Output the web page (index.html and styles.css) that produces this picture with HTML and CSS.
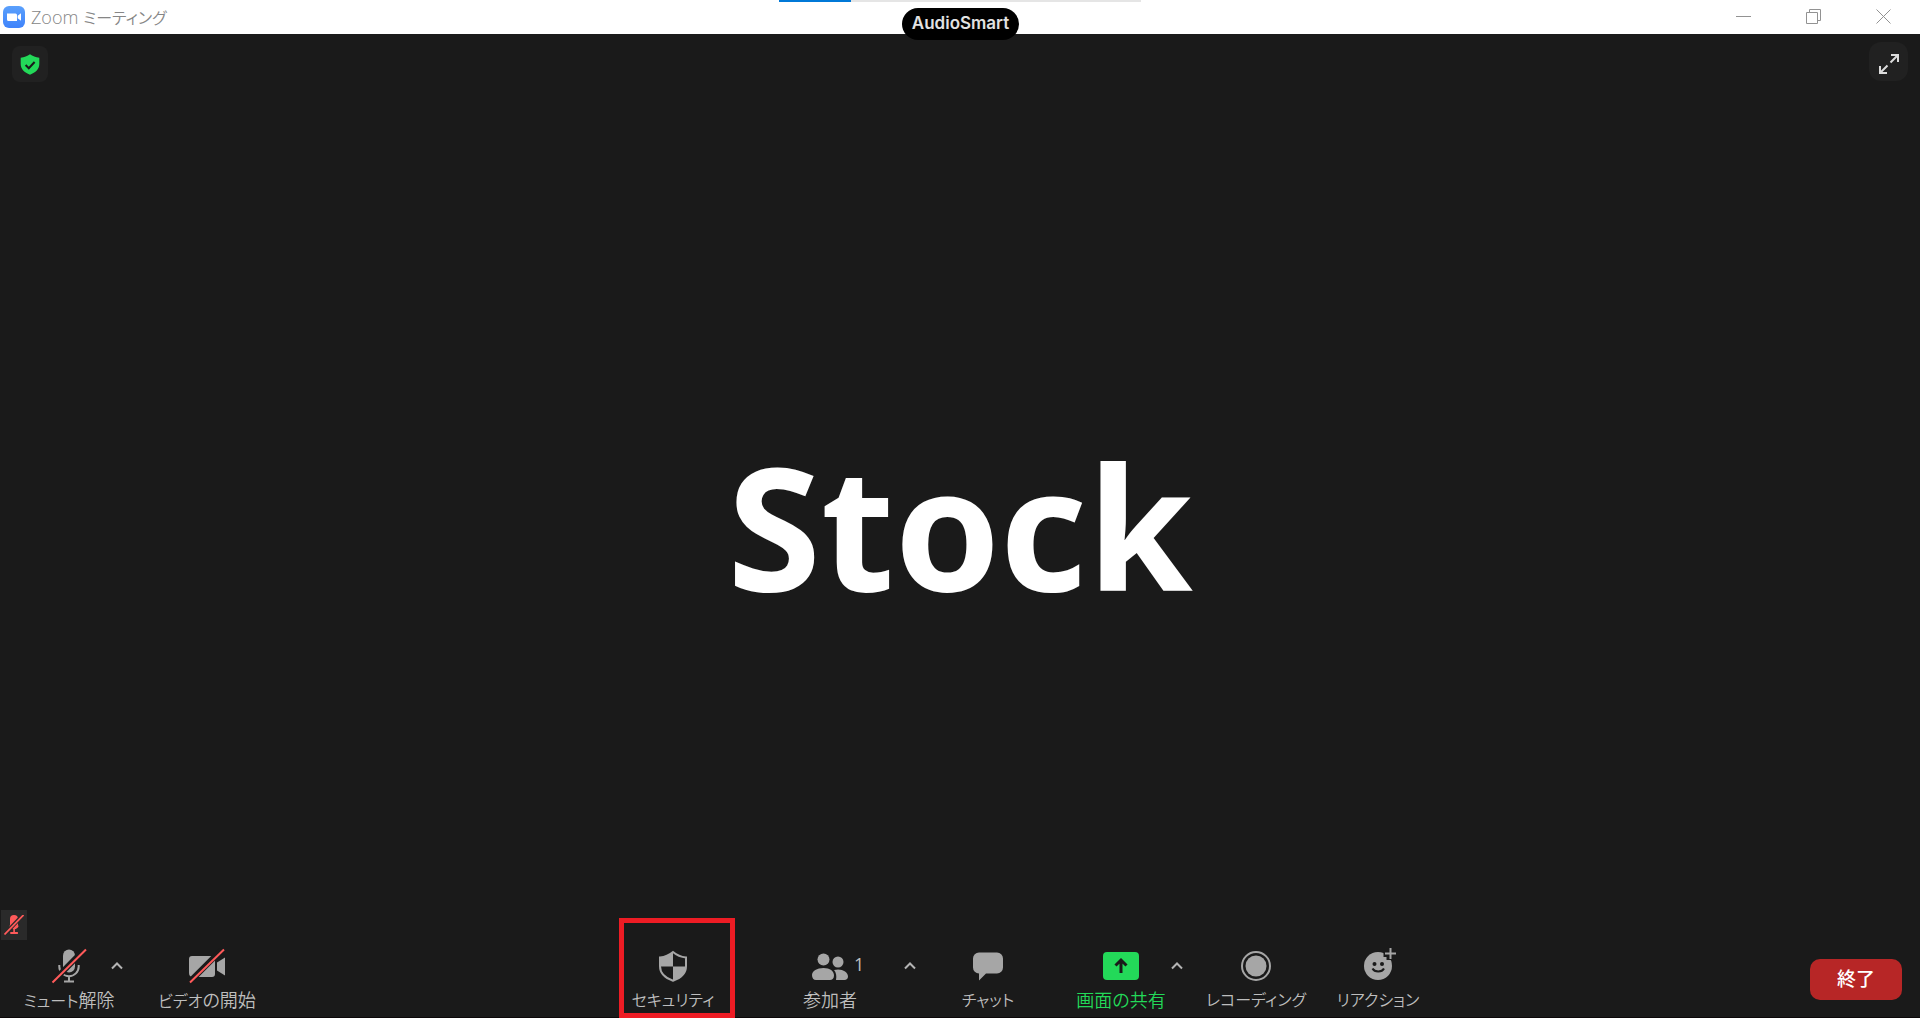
FILE: index.html
```html
<!DOCTYPE html>
<html lang="ja">
<head>
<meta charset="utf-8">
<meta name="viewport" content="width=device-width, initial-scale=1">
<title>Zoom ミーティング</title>
<link rel="stylesheet" href="styles.css">
</head>
<body>
<div class="window">
  <header class="titlebar">
    <svg class="logo" width="22" height="22" viewBox="0 0 22 22" aria-hidden="true">
      <defs><linearGradient id="blue" x1="0" y1="0" x2="0" y2="1"><stop offset="0" stop-color="#5aa0fc"/><stop offset="1" stop-color="#3f83fb"/></linearGradient></defs>
      <rect width="22" height="22" rx="6" fill="url(#blue)"/>
      <path fill="#fff" d="M4 7.500h8.500a1.500 1.500 0 0 1 1.500 1.500v6H5.500A1.500 1.500 0 0 1 4 13.500zM14.700 9.700L18 7.200v7.600l-3.300-2.500z"/>
    </svg>
    <h1 class="title">Zoom <span class="kana">ミーティング</span></h1>
    <div class="window-buttons">
      <button type="button" aria-label="最小化"><svg width="16" height="16" viewBox="0 0 16 16"><path d="M0 7.500h15"/></svg></button>
      <button type="button" aria-label="元に戻す"><svg width="16" height="16" viewBox="0 0 16 16"><path d="M.5 3.500h11v11H.5zM3.500 3V.5h11v11H12"/></svg></button>
      <button type="button" aria-label="閉じる"><svg width="16" height="16" viewBox="0 0 16 16"><path d="M.5.5l14 14M14.500.5l-14 14"/></svg></button>
    </div>
    <div class="audio-progress"><div class="audio-progress-value"></div></div>
    <div class="audio-pill">AudioSmart</div>
  </header>

  <main class="stage">
    <button type="button" class="tile tile-shield" aria-label="ミーティング情報">
      <svg width="20" height="21" viewBox="0 0 20 21"><path fill="#23d959" d="M10 0.300c2.600 2 5.700 3 9.300 3.400V10c0 5-3.600 8.500-9.300 10.700C4.300 18.500.7 15 .7 10V3.700C4.300 3.300 7.400 2.300 10 .3z"/><path d="M5.600 11l3.200 3.200L14.600 8" fill="none" stroke="#1a1a1a" stroke-width="2"/></svg>
    </button>
    <button type="button" class="tile tile-expand" aria-label="全画面表示">
      <svg width="20" height="20" viewBox="0 0 20 20" fill="none" stroke="#dcdcdc" stroke-width="2"><path d="M12 1h7v7M19 1l-7.500 7.500M1 12v7h7M1 19l7.500-7.500"/></svg>
    </button>
    <p class="name">Stock</p>
    <div class="muted" role="img" aria-label="ミュート中">
      <svg width="20" height="20" viewBox="0 0 20 20"><g fill="#ff5a5a"><rect x="6" y="0" width="8" height="13.500" rx="4"/><path d="M9.300 13h1.600v4h3v2H6.300v-2h3z"/></g><path d="M6 10.500a4.200 4.200 0 0 0 8 0" fill="none" stroke="#ff5a5a" stroke-width="1.500"/><path d="M1 19L19 0" stroke="#2a2a2a" stroke-width="4"/><path d="M.5 19.500L19.500 0" stroke="#ff5a5a" stroke-width="1.700"/></svg>
    </div>
  </main>

  <footer class="toolbar">
    <div class="group group-left">
      <button type="button" class="tool">
        <svg class="icon" width="38" height="36" viewBox="0 0 38 36"><rect x="13" y="1.500" width="12" height="23" rx="6" fill="#a6a6a6"/><path d="M9.300 17v1.500a9.700 9.700 0 0 0 19.400 0V17M19 28v5.500M14 33.500h10" fill="none" stroke="#a6a6a6" stroke-width="2"/><path d="M3 33.500L36 0" stroke="#1a1a1a" stroke-width="6"/><path d="M2.500 34.500L36 1.500" stroke="#ff5a5a" stroke-width="2"/></svg>
        <span><span class="kana">ミュート</span>解除</span>
      </button>
      <button type="button" class="more more-overlap" aria-label="オーディオ オプション"><svg width="14" height="10" viewBox="0 0 14 10"><path d="M2 7.500L7 2.500l5 5"/></svg></button>
      <button type="button" class="tool tool-video">
        <svg class="icon" width="38" height="36" viewBox="0 0 38 36"><path fill="#a6a6a6" d="M1 11a3 3 0 0 1 3-3h18.500a4.500 4.500 0 0 1 4.500 4.500V26a3 3 0 0 1-3 3H5a4 4 0 0 1-4-4zM29 14.500l8-5v18l-8-5z"/><path d="M2 33.500L35 .5" stroke="#1a1a1a" stroke-width="6"/><path d="M2 34.500L36 1.500" stroke="#ff5a5a" stroke-width="2"/></svg>
        <span><span class="kana">ビデオ</span>の開始</span>
      </button>
    </div>

    <div class="group">
      <button type="button" class="tool tool-security">
        <svg class="icon" width="38" height="36" viewBox="0 0 38 36"><path d="M19 4c3.500 3 8 5 13 5.500v8.800C32 25.500 27 30 19 32.700 11 30 6 25.500 6 18.300V9.500C11 9 15.500 7 19 4z" fill="none" stroke="#a6a6a6" stroke-width="2"/><path fill="#a6a6a6" d="M19 4v14.500H6v-9C11 9 15.500 7 19 4zM19 18.500h13c0 7-5 11.500-13 14.200z"/></svg>
        <span class="kana">セキュリティ</span>
      </button>
      <button type="button" class="tool tool-people">
        <svg class="icon" width="38" height="36" viewBox="0 0 38 36" fill="#a6a6a6"><circle cx="12.500" cy="11.500" r="6"/><circle cx="27" cy="14" r="5.500"/><path d="M1 27c0-4 5-7 11.500-7S23 23 23 27.500C23 30.500 21 32 19 32H5c-2.500 0-4-2-4-5z"/><path d="M25 32c.800-4 .200-7.500-2-10 7-2 14 1.500 14 6.500 0 2-1.500 3.500-3.500 3.500z"/></svg>
        <b class="count">1</b>
        <span>参加者</span>
      </button>
      <button type="button" class="more more-people" aria-label="参加者オプション"><svg width="14" height="10" viewBox="0 0 14 10"><path d="M2 7.500L7 2.500l5 5"/></svg></button>
      <button type="button" class="tool tool-chat">
        <svg class="icon" width="38" height="36" viewBox="0 0 38 36"><path fill="#a6a6a6" d="M10 4.500h18a6 6 0 0 1 6 6v9a6 6 0 0 1-6 6H17L10 32.500v-7a6 6 0 0 1-6-6v-9a6 6 0 0 1 6-6z"/></svg>
        <span class="kana">チャット</span>
      </button>
      <button type="button" class="tool tool-share">
        <svg class="icon" width="38" height="36" viewBox="0 0 38 36"><rect x="1" y="4" width="36" height="28" rx="4" fill="#23d959"/><path d="M19 25V12.500M13.500 17.500L19 12l5.500 5.500" fill="none" stroke="#1a1a1a" stroke-width="3"/></svg>
        <span>画面の共有</span>
      </button>
      <button type="button" class="more more-share" aria-label="画面共有オプション"><svg width="14" height="10" viewBox="0 0 14 10"><path d="M2 7.500L7 2.500l5 5"/></svg></button>
      <button type="button" class="tool tool-record">
        <svg class="icon" width="38" height="36" viewBox="0 0 38 36"><circle cx="19" cy="18" r="14" fill="none" stroke="#a6a6a6" stroke-width="2"/><circle cx="19" cy="18" r="10.500" fill="#a6a6a6"/></svg>
        <span class="kana">レコーディング</span>
      </button>
      <button type="button" class="tool tool-react">
        <svg class="icon" width="38" height="36" viewBox="0 0 38 36"><circle cx="19" cy="18" r="14" fill="#a6a6a6"/><path d="M24.500 5.500H37M31 0v12" stroke="#1a1a1a" stroke-width="7"/><path d="M26 5.500h11M31.500 0v11" stroke="#a6a6a6" stroke-width="2"/><g fill="#1a1a1a"><circle cx="15.500" cy="16" r="2"/><circle cx="23" cy="16" r="2"/></g><path d="M13.500 20.500c2 4 9.500 4 11.500 0" fill="none" stroke="#1a1a1a" stroke-width="2"/></svg>
        <span class="kana">リアクション</span>
      </button>
    </div>

    <div class="group group-right">
      <button type="button" class="end">終了</button>
    </div>
  </footer>
</div>
</body>
</html>
```
FILE: styles.css
```css
* {
  box-sizing: border-box;
}

body {
  margin: 0;
  background: #1a1a1a;
  font-family: "Open Sans", "Noto Sans CJK JP", sans-serif;
}

button {
  padding: 0;
  border: 0;
  background: none;
  color: inherit;
  font: inherit;
}

svg {
  display: block;
}

.kana {
  font-size: 16px;
}

.window {
  display: flex;
  flex-direction: column;
  min-height: 100vh;
  border-bottom: 1px solid #0c0809;
}

.titlebar {
  position: relative;
  display: flex;
  align-items: center;
  gap: 6px;
  height: 34px;
  padding: 0 1px 0 3px;
  background: #fff;
}

.title {
  flex: 1;
  margin: 0;
  color: #868686;
  font-size: 18px;
  font-weight: 350;
  line-height: 34px;
  font-feature-settings: "palt";
}

.window-buttons {
  display: flex;
}

.window-buttons button {
  display: grid;
  place-items: center;
  width: 70px;
  height: 34px;
}

.window-buttons svg {
  fill: none;
  stroke: #929292;
}

.audio-progress {
  position: absolute;
  top: 0;
  left: 50%;
  width: 362px;
  height: 2px;
  margin-left: -181px;
  background: #e5e5e5;
}

.audio-progress-value {
  width: 20%;
  height: 100%;
  background: #0078d7;
}

.audio-pill {
  position: absolute;
  z-index: 1;
  top: 8px;
  left: 50%;
  width: 117px;
  margin-left: -58px;
  padding-bottom: 2px;
  border-radius: 16px;
  background: #000;
  color: #e2e2e2;
  font-family: Inter, "Open Sans", sans-serif;
  font-size: 17px;
  font-weight: 600;
  line-height: 30px;
  text-align: center;
}

.stage {
  position: relative;
  flex: 1;
  display: grid;
  place-items: center;
}

.tile {
  position: absolute;
  display: grid;
  place-items: center;
  border-radius: 8px;
  background: #212121;
}

.tile-shield {
  top: 12px;
  left: 12px;
  width: 36px;
  height: 36px;
}

.tile-expand {
  top: 8px;
  right: 12px;
  width: 39px;
  height: 39px;
  padding-top: 4px;
  border-radius: 12px;
}

.name {
  margin: 0;
  padding-top: 68px;
  color: #fff;
  font-size: 170px;
  font-weight: 700;
  line-height: 200px;
}

.muted {
  position: absolute;
  bottom: 8px;
  left: 1px;
  display: grid;
  place-items: center;
  width: 26px;
  height: 30px;
  background: #2a2a2a;
}

.toolbar {
  display: flex;
  justify-content: space-between;
  color: #bebebe;
  font-size: 18px;
  font-weight: 350;
  font-feature-settings: "palt";
}

.group {
  display: flex;
  align-items: flex-start;
}

.group-left {
  padding-left: 19px;
}

.group-right {
  padding: 11px 18px 0 20px;
}

.tool {
  position: relative;
  display: flex;
  flex-direction: column;
  align-items: center;
  width: 100px;
  height: 69px;
  line-height: 33px;
  white-space: nowrap;
}

.icon {
  flex: none;
}

.more {
  display: grid;
  place-items: center;
  width: 16px;
  height: 36px;
}

.more svg {
  fill: none;
  stroke: #b4b4b4;
  stroke-width: 2;
}

.more-overlap {
  margin-left: -10px;
}

.tool-video {
  margin-left: 32px;
}

.tool-security {
  width: 108px;
}

/* Red highlight frame around the security button */
.tool-security::after {
  content: "";
  position: absolute;
  inset: -30px -8px -1px 0;
  border: 5px solid #ed1c24;
}

.tool-people {
  margin-left: 53px;
}

.count {
  position: absolute;
  top: 0;
  left: 74px;
  font-weight: 400;
}

.more-people {
  margin-left: 22px;
}

.tool-chat {
  margin-left: 20px;
}

.tool-share {
  margin-left: 33px;
  color: #23d959;
}

.more-share {
  margin-left: -2px;
}

.tool-record {
  margin-left: 21px;
}

.tool-react {
  margin-left: 22px;
}

.end {
  width: 92px;
  height: 41px;
  padding-bottom: 4px;
  border-radius: 10px;
  background: #b72626;
  color: #fff;
  font-size: 19px;
  font-weight: 500;
}
```
